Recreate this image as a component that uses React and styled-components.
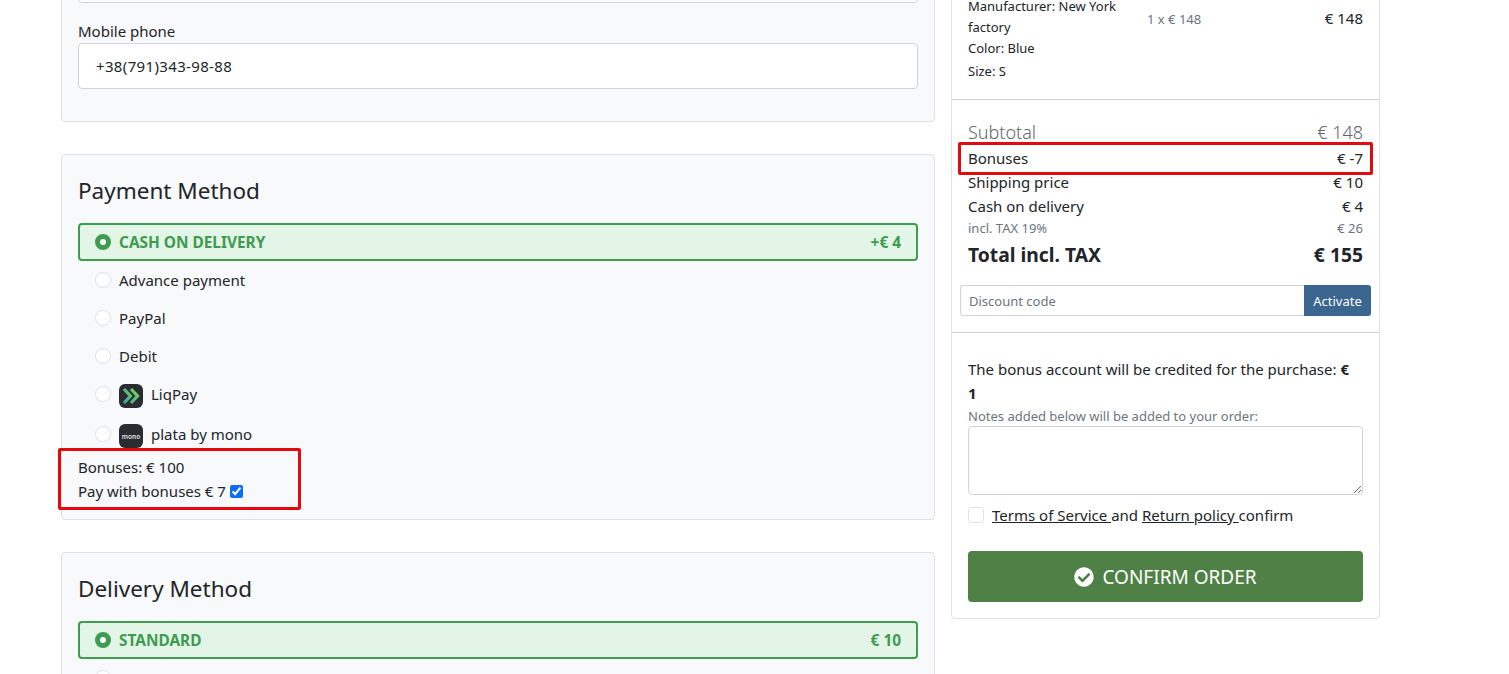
import React from 'react'
import styled, { createGlobalStyle } from 'styled-components'
import { FaCheckCircle } from 'react-icons/fa'

const GlobalStyle = createGlobalStyle`
  html, body {
    margin: 0;
    padding: 0;
    background: #fff;
    overflow: hidden;
  }
  body {
    font-family: "Noto Sans", "Open Sans", Arial, sans-serif;
    font-size: 15px;
    color: #212529;
  }
  * { box-sizing: border-box; }
`

export default function App() {
  return (
    <Viewport>
      <GlobalStyle />
      <Page>
        <LeftColumn>
          <Card>
            <Field>
              <Label></Label>
              <TextInput readOnly value="" />
            </Field>
            <Field>
              <Label>Mobile phone</Label>
              <TextInput readOnly value="+38(791)343-98-88" />
            </Field>
          </Card>

          <MethodCard>
            <Title>Payment Method</Title>
            <SelectedOption>
              <RadioOn />
              <span>CASH ON DELIVERY</span>
              <Price>+€ 4</Price>
            </SelectedOption>
            <Option><RadioOff />Advance payment</Option>
            <Option><RadioOff />PayPal</Option>
            <Option><RadioOff />Debit</Option>
            <Option>
              <RadioOff />
              <LogoBox>
                <svg width="24" height="24" viewBox="0 0 24 24">
                  <defs>
                    <linearGradient id="liq" x1="0" y1="1" x2="1" y2="0">
                      <stop offset="0" stopColor="#3aa6a0" />
                      <stop offset="1" stopColor="#7dd957" />
                    </linearGradient>
                  </defs>
                  <path d="M5 5l6.5 7L5 19M12 5l6.5 7L12 19" fill="none" stroke="url(#liq)" strokeWidth="3.2" />
                </svg>
              </LogoBox>
              LiqPay
            </Option>
            <MonoOption>
              <RadioOff />
              <LogoBox><MonoText>mono</MonoText></LogoBox>
              plata by mono
            </MonoOption>
            <BonusLine>Bonuses: € 100</BonusLine>
            <BonusLine>
              Pay with bonuses € 7 <BonusCheck type="checkbox" checked readOnly />
            </BonusLine>
            <LeftMark />
          </MethodCard>

          <DeliveryCard>
            <Title>Delivery Method</Title>
            <SelectedOption>
              <RadioOn />
              <span>STANDARD</span>
              <Price>€ 10</Price>
            </SelectedOption>
            <Option><RadioOff />Express</Option>
          </DeliveryCard>
        </LeftColumn>

        <SideCard>
          <ItemRow>
            <ItemInfo>
              <div>Manufacturer: New York factory</div>
              <div>Color: Blue</div>
              <SizeLine>Size: S</SizeLine>
            </ItemInfo>
            <ItemQty>1 x € 148</ItemQty>
            <ItemTotal>€ 148</ItemTotal>
          </ItemRow>

          <Summary>
            <SubtotalRow><span>Subtotal</span><span>€ 148</span></SubtotalRow>
            <SummaryRow><span>Bonuses</span><span>€ -7</span></SummaryRow>
            <SummaryRow><span>Shipping price</span><span>€ 10</span></SummaryRow>
            <SummaryRow><span>Cash on delivery</span><span>€ 4</span></SummaryRow>
            <TaxRow><span>incl. TAX 19%</span><span>€ 26</span></TaxRow>
            <TotalRow><span>Total incl. TAX</span><span>€ 155</span></TotalRow>
            <DiscountGroup>
              <DiscountInput placeholder="Discount code" readOnly />
              <ActivateButton>Activate</ActivateButton>
            </DiscountGroup>
            <RightMark />
          </Summary>

          <Checkout>
            <BonusNote>
              The bonus account will be credited for the purchase: <b>€ 1</b>
            </BonusNote>
            <NotesLabel>Notes added below will be added to your order:</NotesLabel>
            <Notes />
            <TermsRow>
              <TermsBox />
              <span><TermsLink>Terms of Service </TermsLink>and <TermsLink>Return policy </TermsLink>confirm</span>
            </TermsRow>
            <ConfirmButton><FaCheckCircle size={20} />CONFIRM ORDER</ConfirmButton>
          </Checkout>
        </SideCard>
      </Page>
    </Viewport>
  )
}

const Viewport = styled.div`
  height: 674px;
  overflow: hidden;
`
const Page = styled.div`
  display: flex;
  align-items: flex-start;
  gap: 16px;
  margin-top: -84px;
  padding-left: 61px;
`
const LeftColumn = styled.div`
  width: 874px;
  display: flex;
  flex-direction: column;
  gap: 32px;
`
const Card = styled.div`
  position: relative;
  background: #f8f9fb;
  border: 1px solid #dfe1e3;
  border-radius: 4px;
  padding: 16px 16px 32px;
`
const MethodCard = styled(Card)`
  height: 366px;
  padding: 16px;
`
const DeliveryCard = styled(Card)`
  padding: 16px;
`
const Field = styled.div`
  & + & { margin-top: 16px; }
`
const Label = styled.div`
  height: 24px;
  line-height: 24px;
`
const TextInput = styled.input`
  display: block;
  width: 100%;
  height: 46px;
  padding: 0 17px;
  border: 1px solid #ced4da;
  border-radius: 4px;
  background: #fff;
  color: #212529;
  font: inherit;
  letter-spacing: 0.35px;
  outline: none;
`
const Title = styled.h2`
  margin: 4px 0 17px;
  font-size: 22.5px;
  font-weight: 400;
  line-height: 31px;
`
const Option = styled.div`
  display: flex;
  align-items: center;
  height: 38px;
  padding-left: 17px;
  gap: 8px;
`
const MonoOption = styled(Option)`
  height: 42px;
`
const SelectedOption = styled(Option)`
  border: 2px solid #3e9b4f;
  border-radius: 4px;
  background: #e2f5e7;
  color: #3e9b4f;
  font-weight: 700;
  padding-left: 15px;
  padding-right: 15px;
  font-size: 15.4px;
`
const Price = styled.span`
  margin-left: auto;
`
const RadioOff = styled.span`
  width: 16px;
  height: 16px;
  flex: none;
  border: 1px solid #dee2e6;
  border-radius: 50%;
  background: #fff;
`
const RadioOn = styled(RadioOff)`
  border: 5px solid #3e9b4f;
`
const LogoBox = styled.span`
  width: 24px;
  height: 24px;
  flex: none;
  display: flex;
  align-items: center;
  justify-content: center;
  margin-top: 4px;
  border-radius: 6px;
  background: #2a2c31;
`
const MonoText = styled.span`
  color: #e4e4e6;
  font-size: 6.5px;
  font-weight: 600;
`
const BonusLine = styled.div`
  height: 24px;
  line-height: 24px;
`
const BonusCheck = styled.input`
  margin: 0;
  vertical-align: -1px;
  accent-color: #0d6efd;
`
const Mark = styled.span`
  position: absolute;
  border: 3px solid #e10b0f;
  border-radius: 2px;
  pointer-events: none;
`
const LeftMark = styled(Mark)`
  left: -4px;
  top: 293px;
  width: 243px;
  height: 62px;
`
const SideCard = styled.div`
  width: 429px;
  background: #fff;
  border: 1px solid #dfe1e3;
  border-radius: 4px;
`
const ItemRow = styled.div`
  display: grid;
  grid-template-columns: 179px 1fr auto;
  padding: 79px 16px 17px;
  border-bottom: 1px solid #ced0d2;
  font-size: 13px;
  line-height: 21px;
`
const ItemInfo = styled.div``
const SizeLine = styled.div`
  margin-top: 2px;
`
const ItemQty = styled.div`
  color: #6c757d;
  padding-top: 13px;
`
const ItemTotal = styled.div`
  font-size: 15px;
  padding-top: 12px;
`
const Summary = styled.div`
  position: relative;
  padding: 19px 16px 16px;
  border-bottom: 1px solid #ced0d2;
`
const SummaryRow = styled.div`
  display: flex;
  justify-content: space-between;
  height: 24px;
  line-height: 24px;
`
const SubtotalRow = styled(SummaryRow)`
  height: 27px;
  line-height: 26px;
  font-size: 18px;
  font-weight: 300;
  color: #5f666d;
`
const TaxRow = styled(SummaryRow)`
  height: 21px;
  line-height: 21px;
  font-size: 13px;
  color: #6c757d;
`
const TotalRow = styled(SummaryRow)`
  height: 32px;
  line-height: 32px;
  font-size: 19.3px;
  font-weight: 700;
`
const DiscountGroup = styled.div`
  display: flex;
  height: 31px;
  margin: 14px -8px 0;
`
const DiscountInput = styled.input`
  flex: 1;
  min-width: 0;
  padding: 0 8px;
  border: 1px solid #ced4da;
  border-right: 0;
  border-radius: 3px 0 0 3px;
  font: inherit;
  font-size: 13px;
  outline: none;
  &::placeholder { color: #6c757d; }
`
const ActivateButton = styled.button`
  width: 67px;
  padding: 0;
  border: 0;
  border-radius: 0 3px 3px 0;
  background: #3a6690;
  color: #fff;
  font: inherit;
  font-size: 13px;
`
const RightMark = styled(Mark)`
  left: 6px;
  top: 42px;
  width: 415px;
  height: 33px;
`
const Checkout = styled.div`
  padding: 24px 16px 16px;
`
const BonusNote = styled.div`
  max-width: 385px;
  line-height: 24px;
`
const NotesLabel = styled.div`
  margin-top: 1px;
  font-size: 13px;
  line-height: 20px;
  color: #6c757d;
`
const Notes = styled.textarea`
  display: block;
  width: 100%;
  height: 69px;
  margin-top: 0;
  border: 1px solid #ced4da;
  border-radius: 4px;
  outline: none;
`
const TermsRow = styled.div`
  display: flex;
  align-items: center;
  gap: 8px;
  margin-top: 8px;
  line-height: 24px;
`
const TermsBox = styled.span`
  width: 16px;
  height: 16px;
  border: 1px solid #dee2e6;
  border-radius: 4px;
  background: #fff;
`
const TermsLink = styled.a`
  color: #212529;
  text-decoration: underline;
`
const ConfirmButton = styled.button`
  display: flex;
  align-items: center;
  justify-content: center;
  gap: 8px;
  width: 100%;
  height: 51px;
  margin-top: 24px;
  border: 0;
  border-radius: 4px;
  background: #4f8146;
  color: #fff;
  font: inherit;
  font-size: 19px;
`
